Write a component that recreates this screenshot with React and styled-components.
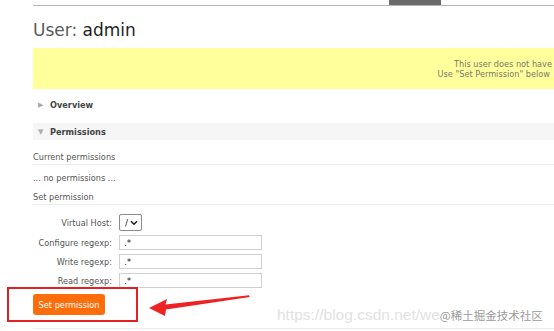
import React from "react";
import styled, { createGlobalStyle } from "styled-components";

const Global = createGlobalStyle`
  html, body {
    margin: 0;
    padding: 0;
    background: #fff;
    overflow: hidden;
  }
  body {
    font-family: "DejaVu Sans", Verdana, sans-serif;
    color: #484848;
  }
`;

function App() {
  return (
    <>
      <Global />
      <Page>
        <TopBar>
          <ActiveTab />
        </TopBar>
        <Title>
          User: <strong>admin</strong>
        </Title>
        <Warning>
          <span>This user does not have</span>
          <span>Use "Set Permission" below</span>
        </Warning>
        <Section>
          <Caret>&#9654;</Caret> Overview
        </Section>
        <Section $open>
          <Caret>&#9660;</Caret> Permissions
        </Section>
        <SubHead $gap={12}>Current permissions</SubHead>
        <Note>... no permissions ...</Note>
        <SubHead $gap={8}>Set permission</SubHead>
        <Form>
          <Label>Virtual Host:</Label>
          <Select>
            <span>/</span>
            <svg width="8" height="6" viewBox="0 0 8 6">
              <path d="M1 1.2 L4 4.2 L7 1.2" fill="none" stroke="#222" strokeWidth="1.6" />
            </svg>
          </Select>
          <Label>Configure regexp:</Label>
          <Input>.*</Input>
          <Label>Write regexp:</Label>
          <Input>.*</Input>
          <Label>Read regexp:</Label>
          <Input>.*</Input>
        </Form>
        <Button>Set permission</Button>
        <Footer />
      </Page>
      <Highlight />
      <Arrow width="110" height="30" viewBox="0 0 110 30">
        <path d="M0 14 L18 5 L16.5 10.5 L100 1.2 L100.8 3 L17 15.5 L16 22 Z" fill="#ee2222" />
      </Arrow>
      <Watermark>
        <Url>https://blog.csdn.net/we</Url>
        <Brand>@稀土掘金技术社区</Brand>
      </Watermark>
    </>
  );
}
export default App;

const Page = styled.div`
  padding-left: 33px;
  display: flex;
  flex-direction: column;
  height: 331px;
  box-sizing: border-box;
`;

const TopBar = styled.div`
  height: 5px;
  border-bottom: 1.5px solid #b4b4b4;
  display: flex;
`;

const ActiveTab = styled.div`
  margin-left: 356px;
  width: 52px;
  background: #6a6a6a;
`;

const Title = styled.h1`
  margin: 14px 0 0;
  height: 21px;
  font-size: 17px;
  font-weight: normal;
  color: #5a5a5a;
  line-height: 21px;

  strong {
    font-weight: normal;
    color: #1e1e1e;
  }
`;

const Warning = styled.div`
  margin-top: 7px;
  height: 41px;
  background: #ffff9c;
  display: flex;
  flex-direction: column;
  align-items: flex-end;
  justify-content: center;
  padding-right: 2px;
  font-size: 8.2px;
  line-height: 10px;
  color: #7a7a6a;
  span:last-child {
    margin-right: 2px;
  }
`;

const Section = styled.div`
  margin-top: ${(p) => (p.$open ? "10px" : "8px")};
  height: ${(p) => (p.$open ? "17px" : "16px")};
  display: flex;
  align-items: center;
  gap: 5px;
  padding-left: 5px;
  font-size: 8.2px;
  font-weight: bold;
  color: #444;
  background: ${(p) => (p.$open ? "#f6f6f6" : "transparent")};
`;

const Caret = styled.span`
  font-size: 7px;
  color: #aaa;
  width: 7px;
`;

const SubHead = styled.div`
  margin-top: ${(p) => p.$gap}px;
  padding-bottom: 1px;
  border-bottom: 1px solid #ececec;
  font-size: 8.2px;
  line-height: 11px;
  color: #555;
`;

const Note = styled.div`
  margin-top: 8px;
  font-size: 8.2px;
  line-height: 11px;
  color: #555;
`;

const Form = styled.div`
  margin-top: 9px;
  display: grid;
  grid-template-columns: 79px 143px;
  column-gap: 7px;
  row-gap: 4px;
  align-items: center;
`;

const Label = styled.div`
  text-align: right;
  font-size: 8.2px;
  color: #555;
`;

const Select = styled.div`
  width: 23px;
  height: 17px;
  box-sizing: border-box;
  border: 1px solid #8a8a8a;
  border-radius: 2px;
  display: flex;
  align-items: center;
  justify-content: space-between;
  padding: 0 3px 0 5px;
  font-size: 9px;
  color: #222;
`;

const Input = styled.div`
  height: 15px;
  box-sizing: border-box;
  border: 1px solid #d0d0d0;
  display: flex;
  align-items: center;
  padding-left: 4px;
  font-size: 9px;
  color: #222;
`;

const Button = styled.div`
  margin-top: 6px;
  width: 72px;
  height: 21px;
  border-radius: 3px;
  background: #ff6d0a;
  color: #fff;
  font-size: 8.2px;
  display: flex;
  align-items: center;
  justify-content: center;
`;

const Footer = styled.div`
  margin-top: auto;
  margin-bottom: 2px;
  border-bottom: 1px solid #eeeeee;
`;

const Highlight = styled.div`
  position: absolute;
  left: 7px;
  top: 287px;
  width: 131px;
  height: 35px;
  box-sizing: border-box;
  border: 2px solid #e42020;
`;

const Arrow = styled.svg`
  position: absolute;
  left: 149px;
  top: 294px;
`;

const Watermark = styled.div`
  position: absolute;
  left: 277px;
  top: 305px;
  display: flex;
  align-items: center;
  white-space: nowrap;
  line-height: 20px;
`;

const Url = styled.span`
  font-family: "Liberation Sans", Arial, sans-serif;
  font-size: 15.5px;
  color: #e2e2e2;
`;

const Brand = styled.span`
  font-family: "Noto Sans CJK SC", sans-serif;
  font-size: 11.5px;
  color: #9a9a9a;
`;
